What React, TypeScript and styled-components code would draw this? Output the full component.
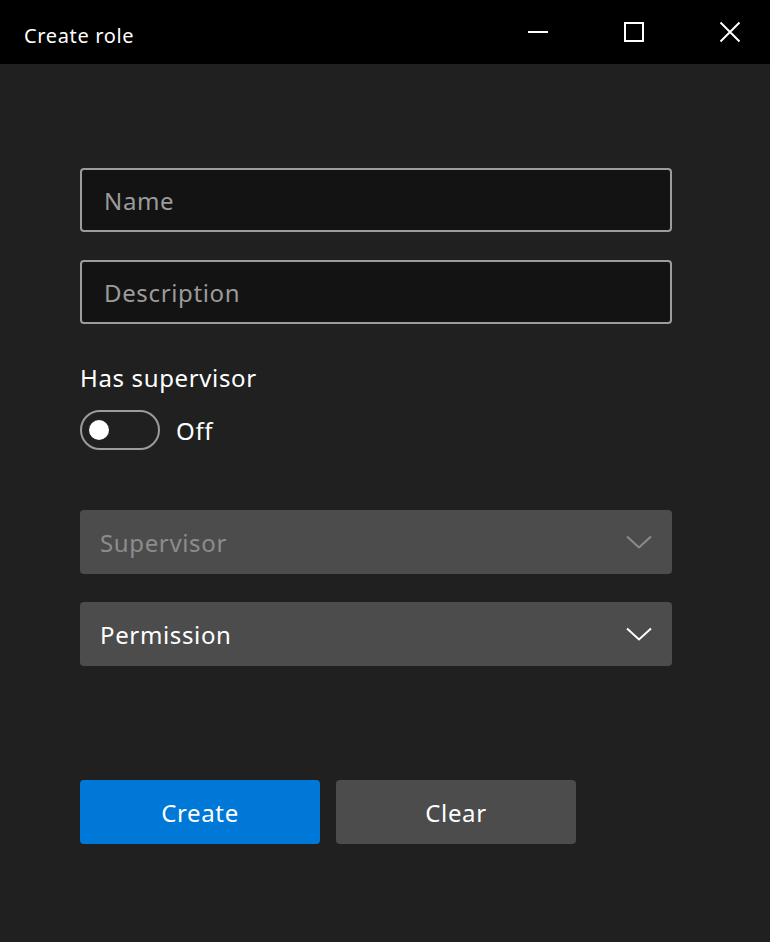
import React from "react";
import styled, { createGlobalStyle } from "styled-components";

const GlobalStyle = createGlobalStyle`
    html, body {
        margin: 0;
        padding: 0;
        background: #202020;
        font-family: "Noto Sans", "Open Sans", sans-serif;
        letter-spacing: 0.04em;
    }
`;

const Window = styled.div`
    width: 770px;
    height: 942px;
    background: #202020;
    display: flex;
    flex-direction: column;
    color: #ffffff;
`;

const TitleBar = styled.div`
    height: 64px;
    background: #000000;
    display: flex;
    align-items: center;
    gap: 16px;
    padding-left: 24px;
    flex-shrink: 0;
`;

const Title = styled.div`
    flex: 1;
    font-size: 20px;
    color: #ffffff;
    padding-top: 7px;
`;

const CaptionButton = styled.div`
    width: 80px;
    height: 64px;
    display: flex;
    align-items: center;
    justify-content: center;
    color: #ffffff;
`;

const Form = styled.div`
    display: flex;
    flex-direction: column;
    padding: 104px 98px 0 80px;
`;

const TextBox = styled.div`
    height: 64px;
    box-sizing: border-box;
    border: 2px solid #9c9c9c;
    border-radius: 4px;
    background: #131313;
    display: flex;
    align-items: center;
    padding-left: 22px;
    font-size: 24px;
    color: #9b9b9b;
    margin-bottom: 28px;
`;

const Label = styled.div`
    font-size: 24px;
    color: #ffffff;
    margin-top: 10px;
    line-height: 32px;
`;

const ToggleRow = styled.div`
    display: flex;
    align-items: center;
    gap: 16px;
    margin-top: 16px;
    font-size: 24px;
`;

const Track = styled.div`
    width: 80px;
    height: 40px;
    box-sizing: border-box;
    border: 2px solid #9c9c9c;
    border-radius: 20px;
    display: flex;
    align-items: center;
    padding-left: 7px;
`;

const Knob = styled.div`
    width: 20px;
    height: 20px;
    border-radius: 50%;
    background: #ffffff;
`;

const Combo = styled.div<{ $disabled?: boolean }>`
    height: 64px;
    box-sizing: border-box;
    border-radius: 4px;
    background: #4c4c4c;
    display: flex;
    align-items: center;
    padding: 0 20px;
    font-size: 24px;
    color: ${(p) => (p.$disabled ? "#8c8c8c" : "#ffffff")};
    margin-bottom: 28px;

    span {
        flex: 1;
    }
`;

const Spacer = styled.div<{ $h: number }>`
    height: ${(p) => p.$h}px;
`;

const Buttons = styled.div`
    display: flex;
    gap: 16px;
`;

const Button = styled.button<{ $primary?: boolean }>`
    width: 240px;
    height: 64px;
    border: none;
    border-radius: 4px;
    background: ${(p) => (p.$primary ? "#0078d7" : "#4c4c4c")};
    color: #ffffff;
    font-family: inherit;
    letter-spacing: inherit;
    font-size: 24px;
    padding: 0;
`;

const Chevron = ({ color }: { color: string }) => (
    <svg width="26" height="14" viewBox="0 0 26 14">
        <path d="M1 1.5 L13 12.5 L25 1.5" fill="none" stroke={color} strokeWidth="2" />
    </svg>
);

export default function App() {
    return (
        <>
            <GlobalStyle />
            <Window>
                <TitleBar>
                    <Title>Create role</Title>
                    <CaptionButton>
                        <svg width="22" height="22" viewBox="0 0 22 22">
                            <rect x="1" y="10" width="20" height="2" fill="#fff" />
                        </svg>
                    </CaptionButton>
                    <CaptionButton>
                        <svg width="22" height="22" viewBox="0 0 22 22">
                            <rect x="2" y="2" width="18" height="18" fill="none" stroke="#fff" strokeWidth="2" />
                        </svg>
                    </CaptionButton>
                    <CaptionButton>
                        <svg width="22" height="22" viewBox="0 0 22 22">
                            <path d="M1.5 1.5 L20.5 20.5 M20.5 1.5 L1.5 20.5" stroke="#fff" strokeWidth="2" />
                        </svg>
                    </CaptionButton>
                </TitleBar>
                <Form>
                    <TextBox>Name</TextBox>
                    <TextBox>Description</TextBox>
                    <Label>Has supervisor</Label>
                    <ToggleRow>
                        <Track>
                            <Knob />
                        </Track>
                        Off
                    </ToggleRow>
                    <Spacer $h={60} />
                    <Combo $disabled>
                        <span>Supervisor</span>
                        <Chevron color="#8c8c8c" />
                    </Combo>
                    <Combo>
                        <span>Permission</span>
                        <Chevron color="#ffffff" />
                    </Combo>
                    <Spacer $h={86} />
                    <Buttons>
                        <Button $primary>Create</Button>
                        <Button>Clear</Button>
                    </Buttons>
                </Form>
            </Window>
        </>
    );
}
